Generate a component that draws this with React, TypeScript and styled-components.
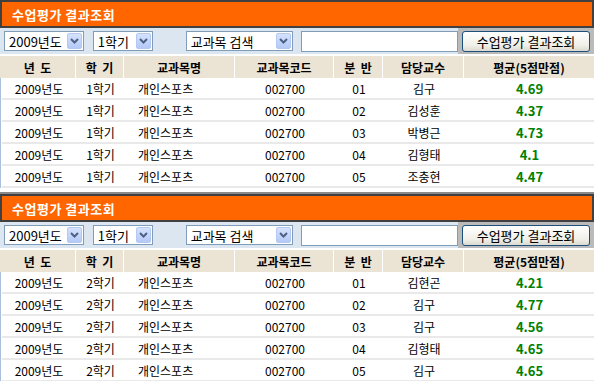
import styled, { createGlobalStyle } from "styled-components"

const GlobalStyle = createGlobalStyle`
  html, body {
    margin: 0;
    padding: 0;
    background: #fff;
  }
  body {
    font-family: "Noto Sans CJK KR", "Noto Sans", sans-serif;
    font-size: 12px;
    color: #000;
  }
`

const Page = styled.div`
  width: 594px;
  display: flex;
  flex-direction: column;
`

const Panel = styled.section`
  display: flex;
  flex-direction: column;
`

const TitleBar = styled.div`
  box-sizing: border-box;
  height: 28px;
  background: #ff6600;
  border: 2px solid #404040;
  display: flex;
  align-items: center;
  padding-left: 10px;
  color: #fff;
  font-weight: bold;
  font-size: 13px;
  letter-spacing: 0.5px;
`

const FilterRow = styled.div`
  display: grid;
  grid-template-columns: 458px 1fr;
  height: 26px;
`

const FilterLeft = styled.div`
  background: #dce6f1;
  display: flex;
  align-items: center;
  padding-left: 4px;
`

const FilterRight = styled.div`
  background: #bababa;
  display: flex;
  align-items: center;
  padding-left: 4px;
`

const SelectBox = styled.div<{ $w: number; $ml?: number }>`
  box-sizing: border-box;
  width: ${(p) => p.$w}px;
  height: 20px;
  margin-left: ${(p) => p.$ml ?? 0}px;
  background: #fff;
  border: 1px solid #7f9db9;
  display: flex;
  align-items: center;
  justify-content: space-between;
  padding: 1px 1px 1px 4px;
  font-size: 13px;
  white-space: nowrap;
`

const ArrowBtn = styled.span`
  box-sizing: border-box;
  width: 15px;
  height: 16px;
  border: 1px solid #b4c8f4;
  border-radius: 2px;
  background: linear-gradient(#d6e2fd, #b4c9f7);
  display: flex;
  align-items: center;
  justify-content: center;
`

const TextInput = styled.div`
  box-sizing: border-box;
  width: 157px;
  height: 21px;
  margin-left: 8px;
  background: #fff;
  border: 1px solid #7f9db9;
`

const SearchButton = styled.button`
  box-sizing: border-box;
  width: 128px;
  height: 21px;
  padding: 0;
  border: 1px solid #1c4f7e;
  border-radius: 3px;
  background: linear-gradient(#ffffff, #f0efe8 70%, #dcdad0);
  font-family: inherit;
  font-size: 13px;
  color: #000;
  line-height: 17px;
`

const cols = "75px 47px 110px 98px 48px 80px 1fr"

const HeaderRow = styled.div`
  display: grid;
  grid-template-columns: ${cols};
  column-gap: 1px;
  margin-top: 2px;
  height: 22px;
  background: #fff;
`

const HeaderCell = styled.div`
  background: #ebe3d4;
  display: flex;
  align-items: center;
  justify-content: center;
  font-weight: bold;
  font-size: 12px;
  white-space: pre;
`

const Body = styled.div`
  border-left: 1px solid #a9bfdc;
  display: flex;
  flex-direction: column;
`

const Row = styled.div`
  display: grid;
  grid-template-columns: 74px 47px 110px 98px 48px 80px 1fr;
  column-gap: 1px;
  height: 22px;
  box-sizing: border-box;
  border-bottom: 2px solid #e9e9e9;
  margin-left: 1px;
`

const Cell = styled.div<{ $left?: boolean }>`
  display: flex;
  align-items: center;
  justify-content: ${(p) => (p.$left ? "flex-start" : "center")};
  padding-left: ${(p) => (p.$left ? "13px" : "0")};
  font-size: 12px;
  white-space: nowrap;
`

const Score = styled(Cell)`
  color: #008000;
  font-weight: bold;
  font-size: 13px;
`

const BottomLine = styled.div`
  margin-top: 4px;
  height: 2px;
  background: #8a8a8a;
`

const Chevron = () => (
  <ArrowBtn>
    <svg width="9" height="6" viewBox="0 0 9 6">
      <polyline points="1,1 4.5,4.5 8,1" fill="none" stroke="#4d6185" strokeWidth="2" />
    </svg>
  </ArrowBtn>
)

type Rec = { code: string; ban: string; prof: string; score: string }

const panels: { term: string; rows: Rec[] }[] = [
  {
    term: "1학기",
    rows: [
      { code: "002700", ban: "01", prof: "김구", score: "4.69" },
      { code: "002700", ban: "02", prof: "김성훈", score: "4.37" },
      { code: "002700", ban: "03", prof: "박병근", score: "4.73" },
      { code: "002700", ban: "04", prof: "김형태", score: "4.1" },
      { code: "002700", ban: "05", prof: "조충현", score: "4.47" },
    ],
  },
  {
    term: "2학기",
    rows: [
      { code: "002700", ban: "01", prof: "김현곤", score: "4.21" },
      { code: "002700", ban: "02", prof: "김구", score: "4.77" },
      { code: "002700", ban: "03", prof: "김구", score: "4.56" },
      { code: "002700", ban: "04", prof: "김형태", score: "4.65" },
      { code: "002700", ban: "05", prof: "김구", score: "4.65" },
    ],
  },
]

const headers = ["년  도", "학  기", "교과목명", "교과목코드", "분  반", "담당교수", "평균(5점만점)"]

export default function App() {
  return (
    <Page>
      <GlobalStyle />
      {panels.map((panel, i) => (
        <Panel key={i}>
          <TitleBar>수업평가 결과조회</TitleBar>
          <FilterRow>
            <FilterLeft>
              <SelectBox $w={80}>
                2009년도
                <Chevron />
              </SelectBox>
              <SelectBox $w={60} $ml={9}>
                1학기
                <Chevron />
              </SelectBox>
              <SelectBox $w={108} $ml={33}>
                교과목 검색
                <Chevron />
              </SelectBox>
              <TextInput />
            </FilterLeft>
            <FilterRight>
              <SearchButton>수업평가 결과조회</SearchButton>
            </FilterRight>
          </FilterRow>
          <HeaderRow>
            {headers.map((h) => (
              <HeaderCell key={h}>{h}</HeaderCell>
            ))}
          </HeaderRow>
          <Body>
            {panel.rows.map((r) => (
              <Row key={r.ban}>
                <Cell>2009년도</Cell>
                <Cell>{panel.term}</Cell>
                <Cell $left>개인스포츠</Cell>
                <Cell>{r.code}</Cell>
                <Cell>{r.ban}</Cell>
                <Cell>{r.prof}</Cell>
                <Score>{r.score}</Score>
              </Row>
            ))}
          </Body>
          <BottomLine />
        </Panel>
      ))}
    </Page>
  )
}
